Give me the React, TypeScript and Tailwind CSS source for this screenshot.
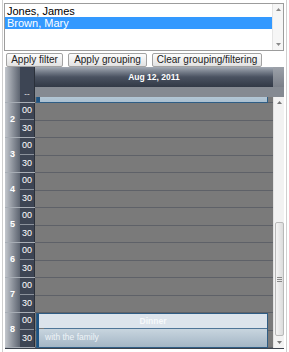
export default function App() {
  const hours = [1, 2, 3, 4, 5, 6, 7, 8];
  return (
    <div className="w-[289px] h-[352px] bg-white overflow-hidden font-['Liberation_Sans',Arial,sans-serif]">
      <div className="ml-[2px] w-[285px] h-[352px] border-l border-r border-[#cfcfcf] pt-[3px] pl-[1px]">
        {/* Listbox */}
        <div className="w-[280px] h-[48px] border border-[#9c9c9c] flex bg-white">
          <div className="flex-1 pt-[1px] text-[11px]">
            <div className="h-[12px] leading-[12px] pl-[2px] text-black">Jones, James</div>
            <div className="h-[12px] leading-[12px] pl-[2px] bg-[#3399ff] text-white">Brown, Mary</div>
          </div>
          <div className="w-[11px] border-l border-[#e4e4e4] bg-[#f6f6f6] flex flex-col justify-between items-center pt-[4px] pb-[4px]">
            <svg width="5" height="3" viewBox="0 0 5 3"><path d="M0 3 L2.5 0 L5 3 Z" fill="#8a8a8a" /></svg>
            <svg width="5" height="3" viewBox="0 0 5 3"><path d="M0 0 L2.5 3 L5 0 Z" fill="#8a8a8a" /></svg>
          </div>
        </div>
        {/* Buttons */}
        <div className="mt-[2px] ml-[2px] flex gap-[5px] text-[10px] text-[#222]">
          <button className="w-[57px] h-[14px] leading-[12px] border border-[#a3a3a3] rounded-[2px] bg-gradient-to-b from-[#fdfdfd] to-[#e2e2e2]">Apply filter</button>
          <button className="w-[79px] h-[14px] leading-[12px] border border-[#a3a3a3] rounded-[2px] bg-gradient-to-b from-[#fdfdfd] to-[#e2e2e2]">Apply grouping</button>
          <button className="w-[110px] h-[14px] leading-[12px] border border-[#a3a3a3] rounded-[2px] bg-gradient-to-b from-[#fdfdfd] to-[#e2e2e2]">Clear grouping/filtering</button>
        </div>
        {/* Scheduler */}
        <div className="ml-[1px] w-[279px] h-[282px] flex flex-col border-b border-[#3c424d]">
          {/* top */}
          <div className="h-[30px] flex">
            <div className="w-[30px] flex">
              <div className="w-[15px] bg-gradient-to-r from-[#c3c7cd] to-[#5d6470]" />
              <div className="w-[14px] bg-[#3d4554] flex items-end justify-center text-white text-[8px] leading-[7px]">--</div>
              <div className="w-px bg-[#2a303a]" />
            </div>
            <div className="flex-1 flex flex-col">
              <div className="h-[20px] flex">
                <div className="w-[238px] bg-gradient-to-b from-[#a4abb5] via-[#4a5261] to-[#323946] flex items-center justify-center text-white font-bold text-[8.5px]">
                  Aug 12, 2011
                </div>
                <div className="flex-1 bg-gradient-to-b from-[#9ca1a9] to-[#7b8089]" />
              </div>
              <div className="h-[10px] bg-[#858a92]" />
            </div>
          </div>
          {/* scroll area */}
          <div className="h-[252px] flex overflow-hidden">
            <div className="w-[268px] overflow-hidden">
              <div className="mt-[-29px] flex">
                {/* ruler */}
                <div className="w-[30px] flex flex-col">
                  {hours.map((h) => (
                    <div key={h} className="h-[35px] flex border-b border-[#a7adb5] box-border">
                      <div className="w-[15px] bg-gradient-to-r from-[#c3c7cd] to-[#5d6470] flex items-center justify-center text-white font-bold text-[9px]">
                        {h}
                      </div>
                      <div className="w-[14px] bg-[#3d4554] flex flex-col text-white text-[9px]">
                        <div className="h-[17px] border-b border-[#8a919b] flex items-center pl-[2px]">00</div>
                        <div className="flex-1 flex items-center pl-[2px]">30</div>
                      </div>
                      <div className="w-px bg-[#2a303a]" />
                    </div>
                  ))}
                </div>
                {/* content */}
                <div className="w-[238px] relative bg-[#7a7a7a]">
                  {hours.map((h) => (
                    <div key={h} className="h-[35px] flex flex-col">
                      <div className="h-[17.5px] border-b border-[#5e6168]" />
                      <div className="h-[17.5px] border-b border-[#5e6168]" />
                    </div>
                  ))}
                  {/* earlier appointment ending at 2:00 */}
                  <div className="absolute left-[1px] top-[10px] w-[232px] h-[25px] border border-[#2f5d84] bg-gradient-to-b from-[#d8e1e9] to-[#a9bfd0] flex">
                    <div className="w-[3px] bg-[#1d5382]" />
                  </div>
                  {/* dinner */}
                  <div className="absolute left-[1px] top-[245px] w-[232px] h-[35px] border border-[#2f5d84] flex">
                    <div className="w-[2px] bg-[#1d5382]" />
                    <div className="flex-1 flex flex-col">
                      <div className="h-[14px] bg-[#dce4ec] flex items-center justify-center text-[#f6f9fb] font-bold text-[8.5px]">Dinner</div>
                      <div className="h-px bg-[#4f7698] ml-[5px]" />
                      <div className="flex-1 bg-gradient-to-b from-[#c8d5df] to-[#a4b6c5] pl-[6px] pt-[2px] text-[8.5px] text-[#eef3f7]">with the family</div>
                    </div>
                  </div>
                </div>
              </div>
            </div>
            {/* scrollbar */}
            <div className="w-[11px] bg-[#f2f2f2] border-l border-[#e2e2e2] flex flex-col items-center">
              <div className="h-[11px] flex items-center justify-center">
                <svg width="5" height="3" viewBox="0 0 5 3"><path d="M0 3 L2.5 0 L5 3 Z" fill="#777" /></svg>
              </div>
              <div className="h-[114px]" />
              <div className="w-[9px] h-[114px] border border-[#b9b9b9] rounded-[2px] bg-gradient-to-r from-[#f4f4f4] to-[#dcdcdc] flex flex-col items-center justify-center gap-[1px]">
                <div className="w-[5px] h-px bg-[#8a8a8a]" />
                <div className="w-[5px] h-px bg-[#8a8a8a]" />
                <div className="w-[5px] h-px bg-[#8a8a8a]" />
              </div>
              <div className="flex-1 flex items-center justify-center">
                <svg width="5" height="3" viewBox="0 0 5 3"><path d="M0 0 L2.5 3 L5 0 Z" fill="#777" /></svg>
              </div>
            </div>
          </div>
        </div>
      </div>
    </div>
  );
}
